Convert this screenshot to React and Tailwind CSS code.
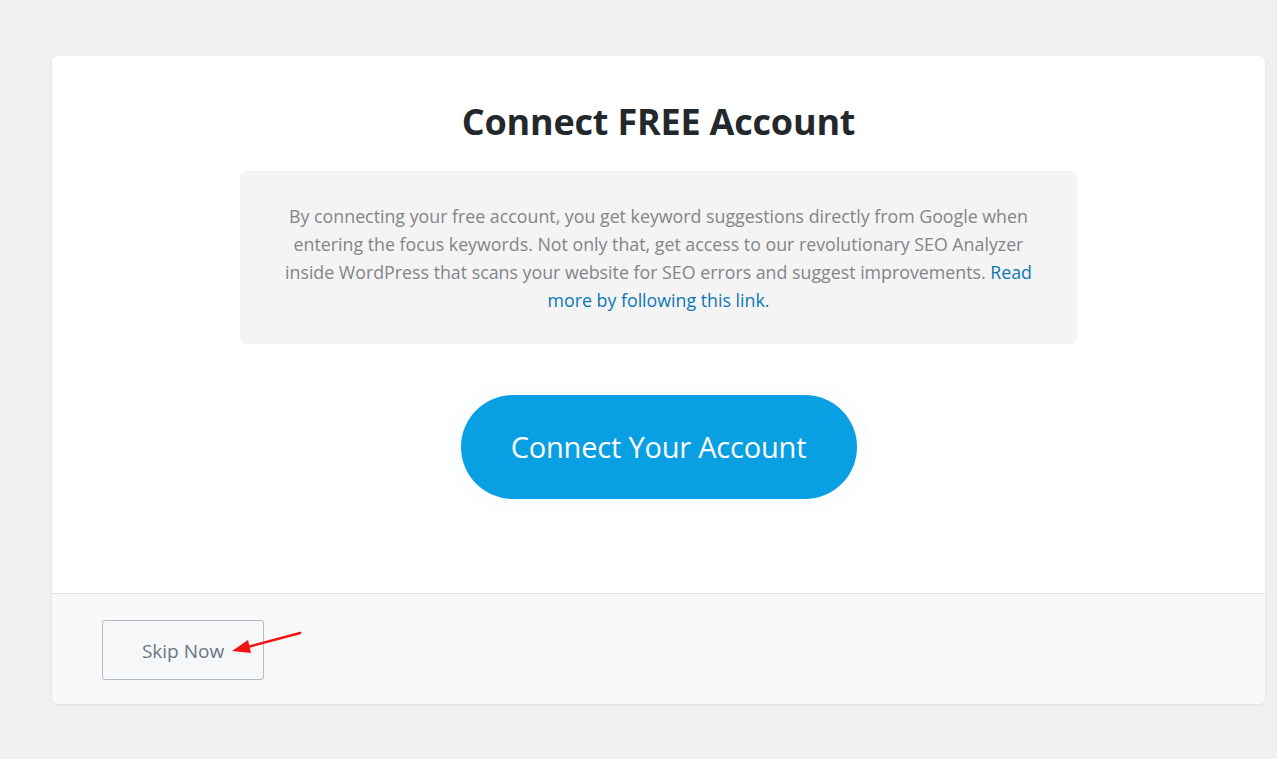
const font = { fontFamily: '"Open Sans", "Noto Sans", sans-serif' }

export default function App() {
    return (
        <div className="min-h-[759px] w-full bg-[#f0f0f1] pt-[56px] pb-[54px]" style={font}>
            <div className="ml-[52px] w-[1213px] rounded-md bg-white shadow-[0_1px_3px_rgba(0,0,0,0.08)] overflow-hidden">
                <div className="flex flex-col items-center pt-[42px] h-[537px]">
                    <h1 className="shrink-0 text-[36px] leading-[48px] font-bold text-[#23282d] tracking-[-0.2px]">
                        Connect FREE Account
                    </h1>
                    <div className="shrink-0 mt-[25px] w-[837px] h-[173px] rounded-md bg-[#f4f4f4] px-[38px] pt-[31px] text-center text-[17.8px] leading-[28px] text-[#838589]">
                        By connecting your free account, you get keyword suggestions directly from Google when
                        entering the focus keywords. Not only that, get access to our revolutionary SEO Analyzer
                        inside WordPress that scans your website for SEO errors and suggest improvements.{' '}
                        <a href="#" className="text-[#0b78b5]">Read more by following this link.</a>
                    </div>
                    <div className="shrink-0 mt-[37px] rounded-full p-[14px] bg-[#fbfdfe]">
                        <button className="w-[396px] h-[104px] rounded-full bg-[#08a0e3] text-white text-[29px] tracking-[-0.2px]">
                            Connect Your Account
                        </button>
                    </div>
                </div>
                <div className="relative border-t border-[#dcdfe3] bg-[#f9f9fa] h-[111px] pl-[50px] pt-[26px]">
                    <button className="w-[162px] h-[60px] rounded-[3px] border border-[#b2bcc7] bg-[#f6f7f8] text-[19px] text-[#6b7684] pt-[3px]">
                        Skip Now
                    </button>
                    <svg className="absolute left-[178px] top-[36px]" width="74" height="26" viewBox="0 0 74 26">
                        <line x1="70" y1="3" x2="14" y2="18" stroke="#f01414" strokeWidth="2.5" strokeLinecap="round" />
                        <polygon points="2,21 18,10 21,23" fill="#f01414" />
                    </svg>
                </div>
            </div>
        </div>
    )
}
